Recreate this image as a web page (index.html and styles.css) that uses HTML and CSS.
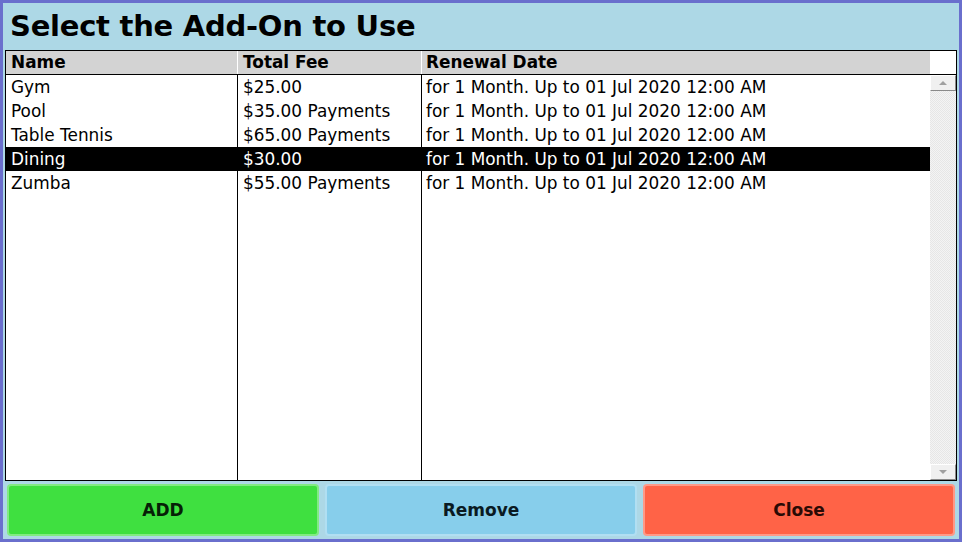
FILE: index.html
```html
<!DOCTYPE html>
<html>
<head>
<meta charset="utf-8">
<link rel="stylesheet" href="styles.css">
</head>
<body>
<div class="window">
  <h1 class="title">Select the Add-On to Use</h1>
  <div class="grid">
    <div class="table-wrap">
      <table class="list">
        <thead>
          <tr><th class="c-name">Name</th><th class="c-fee">Total Fee</th><th class="c-date">Renewal Date</th></tr>
        </thead>
        <tbody>
          <tr><td>Gym</td><td>$25.00</td><td>for 1 Month. Up to 01 Jul 2020 12:00 AM</td></tr>
          <tr><td>Pool</td><td>$35.00 Payments</td><td>for 1 Month. Up to 01 Jul 2020 12:00 AM</td></tr>
          <tr><td>Table Tennis</td><td>$65.00 Payments</td><td>for 1 Month. Up to 01 Jul 2020 12:00 AM</td></tr>
          <tr class="selected"><td>Dining</td><td>$30.00</td><td>for 1 Month. Up to 01 Jul 2020 12:00 AM</td></tr>
          <tr><td>Zumba</td><td>$55.00 Payments</td><td>for 1 Month. Up to 01 Jul 2020 12:00 AM</td></tr>
          <tr class="filler"><td></td><td></td><td></td></tr>
        </tbody>
      </table>
    </div>
    <div class="scroll">
      <div class="scroll-head"></div>
      <div class="scroll-bar">
        <div class="scroll-btn"><span class="arrow up"></span></div>
        <div class="scroll-track"></div>
        <div class="scroll-btn"><span class="arrow down"></span></div>
      </div>
    </div>
  </div>
  <div class="actions">
    <button class="btn btn-add">ADD</button>
    <button class="btn btn-remove">Remove</button>
    <button class="btn btn-close">Close</button>
  </div>
</div>
</body>
</html>
```
FILE: styles.css
```css
html, body {
  margin: 0;
  padding: 0;
}
body {
  width: 962px;
  height: 542px;
  overflow: hidden;
  font-family: "DejaVu Sans", Verdana, sans-serif;
}
.window {
  box-sizing: border-box;
  width: 962px;
  height: 542px;
  border: 3px solid #6a6fcd;
  background: #add8e6;
  display: flex;
  flex-direction: column;
  padding: 0 2px 3px 2px;
}
.title {
  margin: 0;
  height: 47px;
  box-sizing: border-box;
  padding: 5px 0 0 5px;
  font-size: 29px;
  font-weight: bold;
  color: #000;
  letter-spacing: -0.25px;
  line-height: 36px;
  white-space: nowrap;
}
.grid {
  flex: 1;
  display: flex;
  border: 1px solid #000;
  background: #fff;
  min-height: 0;
}
.table-wrap {
  flex: 1;
  display: flex;
}
.list {
  border-collapse: collapse;
  width: 100%;
  height: 100%;
  table-layout: fixed;
  font-size: 16.9px;
  color: #000;
}
.list th {
  background: #d3d3d3;
  height: 23px;
  padding: 0 0 0 5px;
  text-align: left;
  font-weight: bold;
  border-right: 1px solid #fff;
  border-bottom: 1px solid #000;
  white-space: nowrap;
  line-height: 23px;
}
.list th.c-name { width: 226px; }
.list th.c-fee { width: 178px; }
.list th.c-date { border-right: none; padding-left: 4px; }
.list td {
  height: 24px;
  padding: 0 0 0 5px;
  border-right: 1px solid #000;
  white-space: nowrap;
  line-height: 24px;
  vertical-align: middle;
}
.list td:last-child { border-right: none; padding-left: 4px; }
.list tr.selected td {
  background: #000;
  color: #fff;
}
.list tr.filler td {
  height: auto;
}
.scroll {
  width: 26px;
  display: flex;
  flex-direction: column;
}
.scroll-head {
  height: 23px;
  border-bottom: 1px solid #000;
  background: #fff;
}
.scroll-bar {
  flex: 1;
  display: flex;
  flex-direction: column;
}
.scroll-btn {
  height: 16px;
  box-sizing: border-box;
  background: #f0f0f0;
  border: 1px solid #fff;
  border-right-color: #8a8a8a;
  border-bottom-color: #8a8a8a;
  display: flex;
  align-items: center;
  justify-content: center;
}
.scroll-track {
  flex: 1;
  background-color: #f4f4f4;
  background-image:
    linear-gradient(45deg, #e6e6e6 25%, transparent 25%, transparent 75%, #e6e6e6 75%),
    linear-gradient(45deg, #e6e6e6 25%, transparent 25%, transparent 75%, #e6e6e6 75%);
  background-size: 2px 2px;
  background-position: 0 0, 1px 1px;
}
.arrow {
  width: 0;
  height: 0;
  border-left: 4px solid transparent;
  border-right: 4px solid transparent;
}
.arrow.up { border-bottom: 4px solid #a0a0a0; }
.arrow.down { border-top: 4px solid #a0a0a0; }
.actions {
  display: flex;
  gap: 6px;
  padding: 3px 2px 0 2px;
  height: 55px;
  box-sizing: border-box;
}
.btn {
  flex: 1;
  border: 2px solid rgba(255,255,255,0.35);
  border-radius: 4px;
  font-family: "DejaVu Sans", Verdana, sans-serif;
  font-weight: bold;
  font-size: 17px;
  color: #111;
  padding: 0;
}
.btn-add { background: #3fe040; color: #062006; }
.btn-remove { background: #87ceeb; color: #0a1a22; }
.btn-close { background: #ff6347; color: #2a0a05; }
```
